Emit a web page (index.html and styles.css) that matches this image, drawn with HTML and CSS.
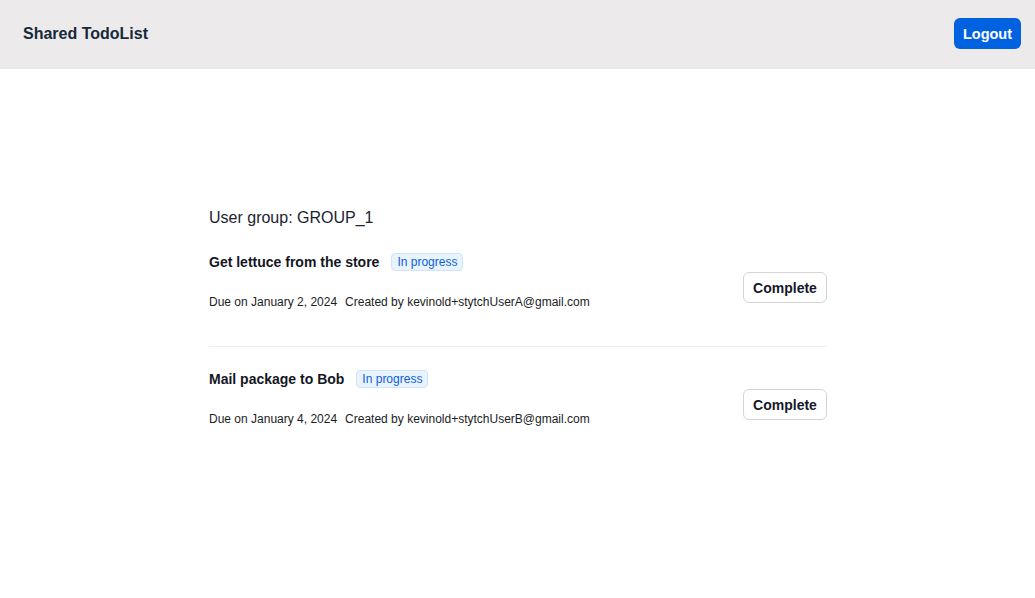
FILE: index.html
```html
<!DOCTYPE html>
<html>
<head>
<meta charset="utf-8">
<link rel="stylesheet" href="styles.css">
</head>
<body>
<header class="topbar">
  <div class="brand">Shared TodoList</div>
  <button class="logout">Logout</button>
</header>
<main class="content">
  <h2 class="group">User group: GROUP_1</h2>
  <div class="todo">
    <div class="todo-info">
      <div class="todo-head">
        <span class="todo-title">Get lettuce from the store</span>
        <span class="badge">In progress</span>
      </div>
      <div class="todo-meta">
        <span>Due on January 2, 2024</span>
        <span>Created by kevinold+stytchUserA@gmail.com</span>
      </div>
    </div>
    <button class="complete">Complete</button>
  </div>
  <div class="todo">
    <div class="todo-info">
      <div class="todo-head">
        <span class="todo-title">Mail package to Bob</span>
        <span class="badge">In progress</span>
      </div>
      <div class="todo-meta">
        <span>Due on January 4, 2024</span>
        <span>Created by kevinold+stytchUserB@gmail.com</span>
      </div>
    </div>
    <button class="complete">Complete</button>
  </div>
</main>
</body>
</html>
```

FILE: styles.css
```css
* { box-sizing: border-box; }
html, body {
  margin: 0;
  background: #ffffff;
  font-family: "Liberation Sans", Arial, sans-serif;
  color: #1a1d24;
}
.topbar {
  height: 69px;
  background: #eceaeb;
  display: flex;
  align-items: center;
  justify-content: space-between;
  padding: 0 14px 0 23px;
}
.brand {
  font-size: 16px;
  font-weight: bold;
  color: #16293a;
  margin-top: -2px;
}
.logout {
  height: 31px;
  width: 67px;
  border: none;
  border-radius: 6px;
  background: #0062e1;
  color: #fff;
  font-family: inherit;
  font-size: 14.5px;
  font-weight: bold;
  padding: 0;
  margin-top: -2px;
}
.content {
  width: 618px;
  margin-left: 209px;
  padding-top: 139px;
}
.group {
  font-size: 16px;
  font-weight: normal;
  line-height: 20px;
  margin: 0 0 2px;
  color: #1b2430;
}
.todo {
  display: flex;
  align-items: center;
  justify-content: space-between;
  padding: 23px 0 24px;
  border-bottom: 1px solid #eeeeee;
}
.todo:last-child { border-bottom: none; }
.todo-info {
  display: flex;
  flex-direction: column;
  padding-bottom: 13px;
}
.todo-head {
  display: flex;
  align-items: center;
  gap: 12px;
  height: 18px;
}
.todo-title {
  font-size: 14px;
  font-weight: bold;
  color: #14171f;
}
.badge {
  font-size: 12px;
  line-height: 16px;
  padding: 0 5px;
  border: 1px solid #cfe3fb;
  background: #e9f3fe;
  color: #0b61d8;
  border-radius: 4px;
}
.todo-meta {
  margin-top: 24px;
  font-size: 12px;
  line-height: 14px;
  display: flex;
  gap: 8px;
  color: #1a1d24;
}
.complete {
  width: 84px;
  height: 31px;
  border: 1px solid #d4d4d8;
  border-radius: 6px;
  background: #fff;
  font-family: inherit;
  font-size: 14px;
  font-weight: bold;
  color: #16182a;
  padding: 0;
}
```
